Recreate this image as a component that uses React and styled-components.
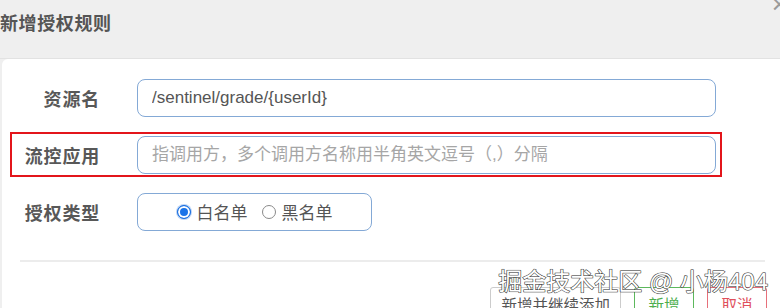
import styled, { createGlobalStyle } from "styled-components";

const GlobalStyle = createGlobalStyle`
  html, body {
    margin: 0;
    padding: 0;
    background: #ffffff;
    overflow: hidden;
  }
  * {
    box-sizing: border-box;
  }
`;

const FONT = `"Liberation Sans", "Noto Sans CJK SC", sans-serif`;

function App() {
  return (
    <>
      <GlobalStyle />
      <Modal>
        <Header>
          <Title>新增授权规则</Title>
          <Close>×</Close>
        </Header>
        <Body>
          <Panel>
            <Form>
              <Row>
                <Label>资源名</Label>
                <TextInput defaultValue="/sentinel/grade/{userId}" />
              </Row>
              <Row highlight>
                <Label>流控应用</Label>
                <TextInput placeholder="指调用方，多个调用方名称用半角英文逗号（,）分隔" />
              </Row>
              <Row>
                <Label>授权类型</Label>
                <RadioGroup>
                  <RadioItem>
                    <RadioDot checked />
                    白名单
                  </RadioItem>
                  <RadioItem>
                    <RadioDot />
                    黑名单
                  </RadioItem>
                </RadioGroup>
              </Row>
            </Form>
            <Divider />
            <Footer>
              <Button>新增并继续添加</Button>
              <Button tone="green">新增</Button>
              <Button tone="red">取消</Button>
              <Watermark>掘金技术社区 @ 小杨404</Watermark>
            </Footer>
          </Panel>
        </Body>
      </Modal>
    </>
  );
}

const Modal = styled.div`
  width: 780px;
  height: 308px;
  position: relative;
  overflow: hidden;
  background: #efefef;
  font-family: ${FONT};
`;

const Header = styled.div`
  height: 59px;
  display: flex;
  justify-content: space-between;
  align-items: flex-start;
  border-bottom: 1px solid #e2e2e2;
`;

const Title = styled.div`
  padding-top: 9px;
  font-size: 18px;
  font-weight: bold;
  color: #555555;
  letter-spacing: 0.6px;
`;

const Close = styled.div`
  margin-top: -9px;
  margin-right: -7px;
  font-size: 26px;
  color: #9a9a9a;
  line-height: 1;
`;

const Body = styled.div`
  padding-left: 2px;
  height: 249px;
`;

const Panel = styled.div`
  height: 100%;
  background: #ffffff;
  border-top-left-radius: 6px;
  padding-top: 16px;
`;

const Form = styled.div`
  display: flex;
  flex-direction: column;
  gap: 12px;
  padding-left: 8px;
`;

const Row = styled.div`
  width: 712px;
  height: 45px;
  display: flex;
  align-items: center;
  gap: 37px;
  outline: ${(p) => (p.highlight ? "2px solid #e3151b" : "none")};
  outline-offset: -2px;
`;

const Label = styled.div`
  width: 90px;
  text-align: right;
  font-size: 18px;
  font-weight: bold;
  color: #585858;
  letter-spacing: 0.8px;
`;

const TextInput = styled.input`
  width: 579px;
  height: 38px;
  border: 1px solid #84a9d6;
  border-radius: 8px;
  padding: 0 14px;
  font-family: ${FONT};
  font-size: 17px;
  color: #555555;
  outline: none;
  background: #ffffff;

  &::placeholder {
    color: #a6a6a6;
  }
`;

const RadioGroup = styled.div`
  width: 235px;
  height: 38px;
  border: 1px solid #84a9d6;
  border-radius: 8px;
  display: flex;
  align-items: center;
  justify-content: center;
  gap: 14px;
`;

const RadioItem = styled.label`
  display: flex;
  align-items: center;
  gap: 6px;
  font-size: 17px;
  color: #555555;
`;

const RadioDot = styled.span`
  width: 14px;
  height: 14px;
  border-radius: 50%;
  border: ${(p) => (p.checked ? "1px solid #1a6fe0" : "1px solid #8a8a8a")};
  background: ${(p) => (p.checked ? "#1a73e8" : "#ffffff")};
  box-shadow: ${(p) =>
    p.checked ? "inset 0 0 0 2px #ffffff, 0 0 0 1px #bcd4f5" : "none"};
`;

const Divider = styled.div`
  margin: 26px 15px 0 18px;
  height: 2px;
  background: #ececec;
`;

const Footer = styled.div`
  position: relative;
  display: flex;
  justify-content: flex-end;
  gap: 13px;
  padding: 25px 13px 0 0;
`;

const toneColor = {
  green: { border: "#5cb85c", color: "#4cae4c" },
  red: { border: "#e7707a", color: "#e0505c" },
};

const Button = styled.button`
  height: 34px;
  min-width: 60px;
  padding: 0 10px;
  background: #ffffff;
  border: 1px solid ${(p) => (p.tone ? toneColor[p.tone].border : "#cccccc")};
  border-radius: 3px;
  font-family: ${FONT};
  font-size: 15.5px;
  color: ${(p) => (p.tone ? toneColor[p.tone].color : "#555555")};
`;

const Watermark = styled.div`
  position: absolute;
  right: 12px;
  top: 0px;
  font-family: ${FONT};
  font-size: 24px;
  color: #ffffff;
  white-space: nowrap;
  -webkit-text-stroke: 1px #333333;
  paint-order: stroke fill;
  text-shadow: 0 0 1px #444;
`;

export default App;
